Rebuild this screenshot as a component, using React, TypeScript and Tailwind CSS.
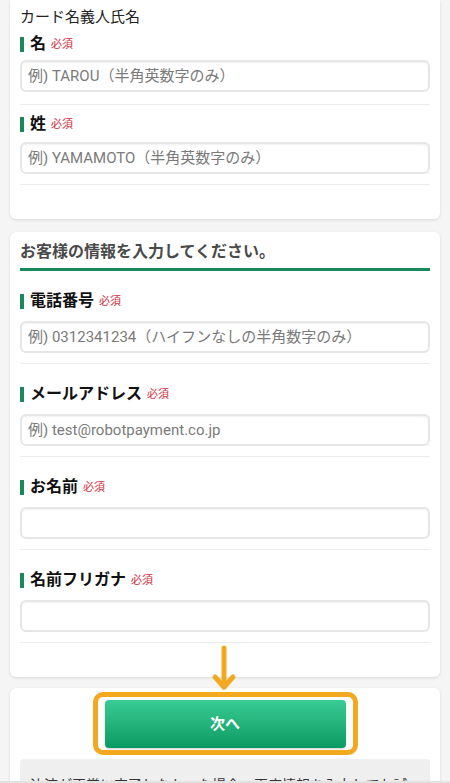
import React from "react";

type Field = { label: string; placeholder?: string };

const CARD_FIELDS: Field[] = [
  { label: "名", placeholder: "例) TAROU（半角英数字のみ）" },
  { label: "姓", placeholder: "例) YAMAMOTO（半角英数字のみ）" },
];

const CUSTOMER_FIELDS: Field[] = [
  { label: "電話番号", placeholder: "例) 0312341234（ハイフンなしの半角数字のみ）" },
  { label: "メールアドレス", placeholder: "例) test@robotpayment.co.jp" },
  { label: "お名前" },
  { label: "名前フリガナ" },
];

function Label({ text }: { text: string }) {
  return (
    <div className="flex h-[20px] items-center">
      <span className="mr-[6px] h-[15px] w-[4px] bg-[#17895a]" />
      <span className="text-[16px] font-bold leading-[20px] text-[#111]">{text}</span>
      <span className="ml-[5px] mt-[2px] text-[11px] leading-[14px] text-[#cf2f3b]">必須</span>
    </div>
  );
}

function TextInput({ placeholder }: { placeholder?: string }) {
  return (
    <input
      type="text"
      placeholder={placeholder}
      className="h-[32px] w-full rounded-[6px] border-2 border-[#e6e6e6] bg-white px-[6px] text-[15px] text-[#333] shadow-[inset_0_1px_2px_rgba(0,0,0,0.06)] outline-none placeholder:text-[#7a7a7a]"
    />
  );
}

function FieldBlock({ field, compact }: { field: Field; compact?: boolean }) {
  return (
    <div className={`border-b border-[#ececec] pb-[10px] ${compact ? "pt-[9px]" : "pt-[20px]"}`}>
      <Label text={field.label} />
      <div className={compact ? "mt-[8px]" : "mt-[10px]"}>
        <TextInput placeholder={field.placeholder} />
      </div>
    </div>
  );
}

export default function App() {
  return (
    <div
      className="relative h-[783px] w-[450px] overflow-hidden bg-[#f5f5f5]"
      style={{ fontFamily: 'Roboto, "Noto Sans CJK JP", sans-serif' }}
    >
      {/* card holder name */}
      <div className="mx-[10px] rounded-b-[6px] bg-white px-[10px] pb-[34px] pt-[7px] shadow-[0_1px_3px_rgba(0,0,0,0.12)]">
        <p className="text-[15px] leading-[20px] text-[#222]">カード名義人氏名</p>
        <div className="mt-[7px]">
          <div className="pb-[12px]">
            <Label text={CARD_FIELDS[0].label} />
            <div className="mt-[6px]">
              <TextInput placeholder={CARD_FIELDS[0].placeholder} />
            </div>
          </div>
          <div className="border-t border-[#ececec]" />
          <FieldBlock field={CARD_FIELDS[1]} compact />
        </div>
      </div>

      {/* customer info */}
      <div className="mx-[10px] mt-[13px] rounded-[6px] bg-white px-[10px] pb-[34px] pt-[8px] shadow-[0_1px_3px_rgba(0,0,0,0.12)]">
        <h2 className="border-b-[3px] border-[#17895a] pb-[4px] text-[16px] font-bold leading-[24px] text-[#4a4a4a]">
          お客様の情報を入力してください。
        </h2>
        {CUSTOMER_FIELDS.map((f) => (
          <FieldBlock key={f.label} field={f} />
        ))}
      </div>

      {/* submit */}
      <div className="mx-[10px] mt-[11px] rounded-t-[6px] bg-white px-[10px] pt-[12px] shadow-[0_1px_3px_rgba(0,0,0,0.12)]">
        <div className="flex justify-center">
          <button className="h-[48px] w-[241px] rounded-[4px] bg-gradient-to-b from-[#38cc95] to-[#079a62] text-[15px] font-bold text-white shadow-[0_1px_2px_rgba(0,0,0,0.2)]">
            次へ
          </button>
        </div>
        <div className="mt-[11px] rounded-t-[4px] bg-[#efefef] px-[10px] pt-[16px] text-[14px] leading-[20px] text-[#333]">
          決済が正常に完了しなかった場合、再度情報を入力してお試しください。
        </div>
      </div>

      {/* bottom edge band */}
      <div className="absolute inset-x-0 bottom-0 h-[2px] bg-[#e2e2e2]" />

      {/* annotation overlay */}
      <div className="pointer-events-none absolute left-[93px] top-[692px] h-[63px] w-[265px] rounded-[10px] border-[5px] border-[#f3a91f]" />
      <svg
        className="pointer-events-none absolute left-[210px] top-[644px]"
        width="28"
        height="48"
        viewBox="0 0 28 48"
        fill="none"
        stroke="#f3a91f"
        strokeWidth="5"
        strokeLinecap="round"
        strokeLinejoin="round"
      >
        <path d="M14 4 V43" />
        <path d="M5 33 L14 43 L23 33" />
      </svg>
    </div>
  );
}
